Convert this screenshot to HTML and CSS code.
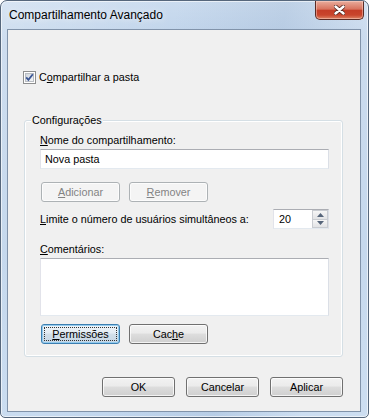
FILE: index.html
```html
<!DOCTYPE html>
<html lang="pt-BR">
<head>
    <meta charset="UTF-8">
    <title>Compartilhamento Avançado</title>
    <link rel="stylesheet" href="styles.css">
</head>
<body>
    <div class="window">
        <div class="titlebar">
            <span class="title">Compartilhamento Avançado</span>
            <button class="close" title="Fechar">
                <svg width="11" height="10" viewBox="0 0 11 10">
                    <path d="M1.5 1.5 L9.5 8.5 M9.5 1.5 L1.5 8.5" stroke="#5a2a22" stroke-width="4.2" stroke-linecap="round"/>
                    <path d="M1.5 1.5 L9.5 8.5 M9.5 1.5 L1.5 8.5" stroke="#fff" stroke-width="2.4" stroke-linecap="round"/>
                </svg>
            </button>
        </div>

        <div class="client">
            <label class="check-row">
                <span class="checkbox">
                    <svg width="13" height="13" viewBox="0 0 13 13">
                        <defs>
                            <linearGradient id="cbfill" x1="0" y1="0" x2="1" y2="1">
                                <stop offset="0" stop-color="#cdd3da"/>
                                <stop offset="1" stop-color="#f7f8f9"/>
                            </linearGradient>
                        </defs>
                        <rect x="0.5" y="0.5" width="12" height="12" fill="#fff" stroke="#8e8f8f"/>
                        <rect x="2.5" y="2.5" width="8" height="8" fill="url(#cbfill)" stroke="#b9bdc3"/>
                        <path d="M3.2 6.4 L5.4 8.8 L9.8 3.2" stroke="#3a5594" stroke-width="1.8" fill="none"/>
                    </svg>
                </span>
                <span>C<u>o</u>mpartilhar a pasta</span>
            </label>

            <div class="group">
                <div class="group-title">Configurações</div>

                <div class="field-label"><u>N</u>ome do compartilhamento:</div>
                <div class="textbox">Nova pasta</div>

                <div class="btn-row">
                    <button class="btn" disabled><u>A</u>dicionar</button>
                    <button class="btn" disabled><u>R</u>emover</button>
                </div>

                <div class="limit-row">
                    <span><u>L</u>imite o número de usuários simultâneos a:</span>
                    <div class="spin">
                        <span class="spin-value">20</span>
                        <span class="spin-arrows">
                            <span class="arrow">
                                <svg width="7" height="4" viewBox="0 0 7 4"><path d="M0 4 L3.5 0 L7 4 Z" fill="#56657a"/></svg>
                            </span>
                            <span class="arrow">
                                <svg width="7" height="4" viewBox="0 0 7 4"><path d="M0 0 L3.5 4 L7 0 Z" fill="#56657a"/></svg>
                            </span>
                        </span>
                    </div>
                </div>

                <div class="field-label comments-label"><u>C</u>omentários:</div>
                <div class="textarea"></div>

                <div class="btn-row btn-row-bottom">
                    <button class="btn focused"><u>P</u>ermissões</button>
                    <button class="btn">Cac<u>h</u>e</button>
                </div>
            </div>

            <div class="dialog-buttons">
                <button class="btn btn-dialog">OK</button>
                <button class="btn btn-dialog">Cancelar</button>
                <button class="btn btn-dialog">Aplicar</button>
            </div>
        </div>
    </div>
</body>
</html>
```

FILE: styles.css
```css
* { box-sizing: border-box; }

body {
    margin: 0;
    background: #fff;
    font-family: "Liberation Sans", Arial, sans-serif;
    font-size: 10.8px;
    color: #000;
}

u { text-decoration: underline; text-underline-offset: 1px; }

.window {
    width: 369px;
    height: 418px;
    display: flex;
    flex-direction: column;
    border: 1px solid #56677c;
    border-radius: 7px 7px 5px 5px;
    background:
        linear-gradient(100deg, rgba(255,255,255,0.25) 0%, rgba(255,255,255,0) 40%, rgba(120,145,180,0.14) 65%, rgba(255,255,255,0.18) 85%),
        linear-gradient(180deg, #cbdcef 0%, #bfd3ea 40px, #b9d0e9 60%, #c2d7ee 100%);
    box-shadow: inset 0 0 0 1px rgba(255,255,255,0.6);
    overflow: hidden;
}

.titlebar {
    height: 28px;
    display: flex;
    align-items: flex-start;
    padding-left: 8px;
}

.title {
    line-height: 28px;
    font-size: 12px;
    color: #000;
    text-shadow: 0 0 6px rgba(255,255,255,0.9);
}

.close {
    margin-left: auto;
    margin-right: 4px;
    width: 49px;
    height: 19px;
    padding: 0;
    display: flex;
    align-items: center;
    justify-content: center;
    border: 1px solid #5b2b24;
    border-top: none;
    border-radius: 0 0 5px 5px;
    background: linear-gradient(180deg, #e9ad9d 0%, #d8735e 45%, #c53d27 52%, #c9452c 78%, #de8465 100%);
    box-shadow: inset 0 0 0 1px rgba(255,220,210,0.45);
}

.client {
    flex: 1;
    margin: 0 7px 5px 6px;
    padding: 40px 17px 0 15px;
    border: 1px solid #8193aa;
    background: #f0f0f0;
}

.check-row {
    display: flex;
    align-items: center;
    gap: 3px;
    height: 15px;
    line-height: 15px;
}

.checkbox { display: flex; }

.group {
    margin: 35px 0 0 1px;
    padding: 0 13px 12px 15px;
    border: 1px solid #d5dfe5;
    border-radius: 3px;
    box-shadow: inset 0 0 0 1px #fff;
}

.group-title {
    width: fit-content;
    margin: -8px 0 0 -9px;
    padding: 0 1px;
    line-height: 15px;
    background: #f0f0f0;
}

.field-label {
    margin-top: 5px;
    line-height: 15px;
}

.comments-label { margin-top: 13px; }

.textbox,
.textarea {
    margin-top: 1px;
    background: #fff;
    border: 1px solid;
    border-color: #abadb3 #dbdfe6 #e3e9ef #e2e3ea;
}

.textbox {
    height: 20px;
    line-height: 18px;
    padding-left: 4px;
}

.textarea { height: 58px; }

.btn-row {
    display: flex;
    gap: 9px;
    margin-top: 13px;
    padding-left: 1px;
}

.btn-row-bottom { margin-top: 8px; }

.btn {
    position: relative;
    width: 79px;
    height: 20px;
    padding: 0;
    font: inherit;
    line-height: 18px;
    color: #000;
    border: 1px solid #707070;
    border-radius: 3px;
    background: linear-gradient(180deg, #f2f2f2 0%, #ebebeb 45%, #dddddd 50%, #cfcfcf 100%);
    box-shadow: inset 0 0 0 1px rgba(255,255,255,0.75);
}

.btn:disabled {
    color: #838383;
    border-color: #adb2b5;
    background: #f4f4f4;
    box-shadow: inset 0 0 0 1px #fcfcfc;
}

.btn.focused {
    border-color: #3c7fb1;
    background: linear-gradient(180deg, #eef4f9 0%, #e3ecf4 45%, #d2dfea 50%, #c6d7e6 100%);
    box-shadow: inset 0 0 0 1px #93cbee;
}

.btn.focused::after {
    content: "";
    position: absolute;
    inset: 2px;
    border: 1px dotted #333;
}

.limit-row {
    margin-top: 7px;
    display: flex;
    align-items: center;
    justify-content: space-between;
}

.spin {
    width: 56px;
    height: 20px;
    display: flex;
    background: #fff;
    border: 1px solid;
    border-color: #abadb3 #dbdfe6 #e3e9ef #e2e3ea;
}

.spin-value {
    flex: 1;
    padding-left: 5px;
    line-height: 18px;
}

.spin-arrows {
    width: 16px;
    display: flex;
    flex-direction: column;
}

.arrow {
    flex: 1;
    display: flex;
    align-items: center;
    justify-content: center;
    border: 1px solid #c9ccd1;
    background: linear-gradient(180deg, #f6f6f6, #e2e3e5);
}

.arrow + .arrow { border-top: none; }

.dialog-buttons {
    margin-top: 20px;
    display: flex;
    justify-content: flex-end;
    gap: 11px;
}

.btn-dialog { width: 73px; }
```
